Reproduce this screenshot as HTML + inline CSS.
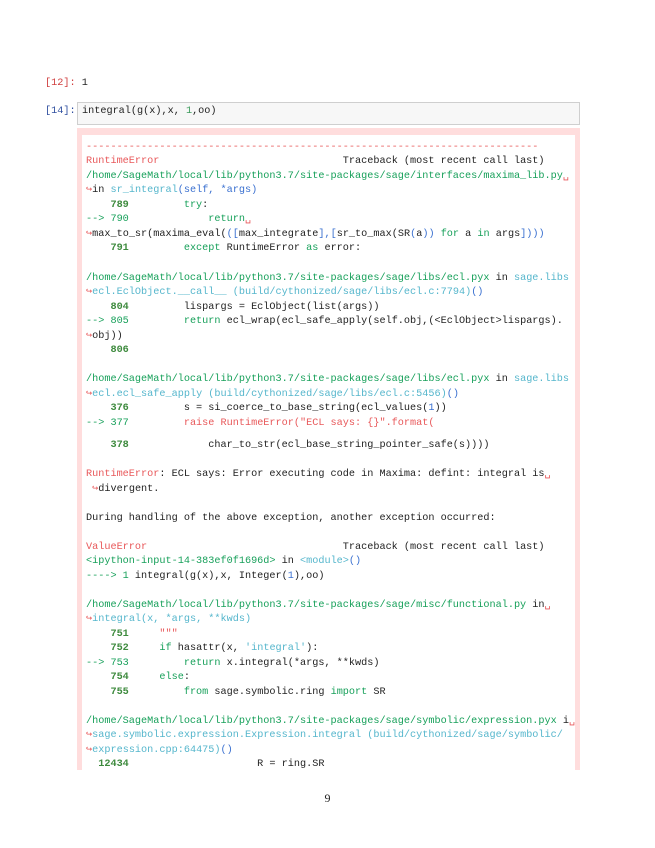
<!DOCTYPE html>
<html><head><meta charset="utf-8"><style>
body{margin:0;width:655px;height:848px;background:#fff;position:relative;overflow:hidden;font-family:"Liberation Mono",monospace;font-size:10.2px;color:#222}
.l{position:absolute;left:86px;white-space:pre;line-height:14px}
.g{color:#17a05a}.n{color:#3d8a3d;font-weight:bold}.c{color:#55b6cc}.b{color:#3a70d0}.r{color:#e8585a}.k{color:#17a05a}
.pr{position:absolute;white-space:pre;font-size:10.2px}
</style></head><body>
<div class="pr" style="left:45px;top:78px;color:#d04040">[12]: <span style="color:#222">1</span></div>
<div class="pr" style="left:45px;top:106px;color:#3050a0">[14]:</div>
<div style="position:absolute;left:77px;top:102px;width:501px;height:21px;background:#f7f7f7;border:1px solid #cfcfcf"></div>
<div class="pr" style="left:82px;top:106px">integral(g(x),x, <span style="color:#3a9a5a">1</span>,oo)</div>
<div style="position:absolute;left:77px;top:128px;width:503px;height:642px;background:#ffdddd"></div>
<div style="position:absolute;left:82px;top:135px;width:493px;height:635px;background:#fff"></div>
<div class="l r" style="top:141px">--------------------------------------------------------------------------</div>
<div class="l" style="top:155px"><span class="r">RuntimeError</span>                              Traceback (most recent call last)</div>
<div class="l g" style="top:170px">/home/SageMath/local/lib/python3.7/site-packages/sage/interfaces/maxima_lib.py<span class="r">␣</span></div>
<div class="l" style="top:184px"><span class="r">↪</span>in <span class="c">sr_integral</span><span class="b">(self, *args)</span></div>
<div class="l" style="top:199px"><span class="n">    789</span>         <span class="k">try</span>:</div>
<div class="l" style="top:213px"><span class="g">--&gt; 790</span>             <span class="k">return</span><span class="r">␣</span></div>
<div class="l" style="top:228px"><span class="r">↪</span>max_to_sr(maxima_eval(<span class="b">([</span>max_integrate<span class="b">],[</span>sr_to_max(SR<span class="b">(</span>a<span class="b">))</span> <span class="k">for</span> a <span class="k">in</span> args<span class="b">])))</span></div>
<div class="l" style="top:242px"><span class="n">    791</span>         <span class="k">except</span> RuntimeError <span class="k">as</span> error:</div>
<div class="l" style="top:272px"><span class="g">/home/SageMath/local/lib/python3.7/site-packages/sage/libs/ecl.pyx</span> in <span class="c">sage.libs</span></div>
<div class="l c" style="top:286px"><span class="r">↪</span>ecl.EclObject.__call__ (build/cythonized/sage/libs/ecl.c:7794)<span class="b">()</span></div>
<div class="l" style="top:301px"><span class="n">    804</span>         lispargs = EclObject(list(args))</div>
<div class="l" style="top:315px"><span class="g">--&gt; 805</span>         <span class="k">return</span> ecl_wrap(ecl_safe_apply(self.obj,(&lt;EclObject&gt;lispargs).</div>
<div class="l" style="top:330px"><span class="r">↪</span>obj))</div>
<div class="l" style="top:344px"><span class="n">    806</span></div>
<div class="l" style="top:373px"><span class="g">/home/SageMath/local/lib/python3.7/site-packages/sage/libs/ecl.pyx</span> in <span class="c">sage.libs</span></div>
<div class="l c" style="top:388px"><span class="r">↪</span>ecl.ecl_safe_apply (build/cythonized/sage/libs/ecl.c:5456)<span class="b">()</span></div>
<div class="l" style="top:402px"><span class="n">    376</span>         s = si_coerce_to_base_string(ecl_values(<span class="b">1</span>))</div>
<div class="l" style="top:417px"><span class="g">--&gt; 377</span>         <span class="r">raise RuntimeError("ECL says: {}".format(</span></div>
<div class="l" style="top:439px"><span class="n">    378</span>             char_to_str(ecl_base_string_pointer_safe(s))))</div>
<div class="l" style="top:468px"><span class="r">RuntimeError</span>: ECL says: Error executing code in Maxima: defint: integral is<span class="r">␣</span></div>
<div class="l" style="top:483px"> <span class="r">↪</span>divergent.</div>
<div class="l" style="top:512px">During handling of the above exception, another exception occurred:</div>
<div class="l" style="top:541px"><span class="r">ValueError</span>                                Traceback (most recent call last)</div>
<div class="l" style="top:555px"><span class="g">&lt;ipython-input-14-383ef0f1696d&gt;</span> in <span class="c">&lt;module&gt;</span><span class="b">()</span></div>
<div class="l" style="top:570px"><span class="g">----&gt; 1</span> integral(g(x),x, Integer(<span class="b">1</span>),oo)</div>
<div class="l" style="top:599px"><span class="g">/home/SageMath/local/lib/python3.7/site-packages/sage/misc/functional.py</span> in<span class="r">␣</span></div>
<div class="l c" style="top:613px"><span class="r">↪</span>integral(x, *args, **kwds)</div>
<div class="l" style="top:628px"><span class="n">    751</span>     <span class="r">"""</span></div>
<div class="l" style="top:642px"><span class="n">    752</span>     <span class="k">if</span> hasattr(x, <span class="c">'integral'</span>):</div>
<div class="l" style="top:657px"><span class="g">--&gt; 753</span>         <span class="k">return</span> x.integral(*args, **kwds)</div>
<div class="l" style="top:671px"><span class="n">    754</span>     <span class="k">else</span>:</div>
<div class="l" style="top:686px"><span class="n">    755</span>         <span class="k">from</span> sage.symbolic.ring <span class="k">import</span> SR</div>
<div class="l" style="top:715px"><span class="g">/home/SageMath/local/lib/python3.7/site-packages/sage/symbolic/expression.pyx</span> i<span class="r">␣</span></div>
<div class="l c" style="top:729px"><span class="r">↪</span>sage.symbolic.expression.Expression.integral (build/cythonized/sage/symbolic/</div>
<div class="l c" style="top:744px"><span class="r">↪</span>expression.cpp:64475)<span class="b">()</span></div>
<div class="l" style="top:758px"><span class="n">  12434</span>                     R = ring.SR</div>
<div style="position:absolute;left:0;width:655px;top:791px;text-align:center;font-family:'Liberation Serif',serif;font-size:12px">9</div>
</body></html>
